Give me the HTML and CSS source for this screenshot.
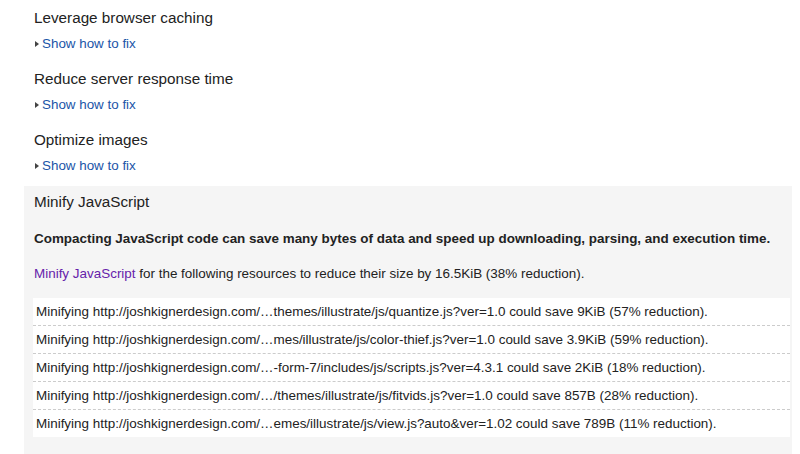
FILE: index.html
```html
<!DOCTYPE html>
<html lang="en">
<head>
  <meta charset="UTF-8" />
  <meta name="viewport" content="width=device-width, initial-scale=1.0" />
  <title>PageSpeed suggestions</title>
  <link rel="stylesheet" href="styles.css">
</head>
<body>
  <div class="rule">
    <h3>Leverage browser caching</h3>
    <a class="toggle" href="#"><span class="arrow"></span>Show how to fix</a>
  </div>
  <div class="rule">
    <h3>Reduce server response time</h3>
    <a class="toggle" href="#"><span class="arrow"></span>Show how to fix</a>
  </div>
  <div class="rule">
    <h3>Optimize images</h3>
    <a class="toggle" href="#"><span class="arrow"></span>Show how to fix</a>
  </div>

  <div class="rule open">
    <h3>Minify JavaScript</h3>
    <p class="summary">Compacting JavaScript code can save many bytes of data and speed up downloading, parsing, and execution time.</p>
    <p class="advice"><a class="visited" href="#">Minify JavaScript</a> for the following resources to reduce their size by 16.5KiB (38% reduction).</p>
    <ul class="urls">
      <li>Minifying http://joshkignerdesign.com/…themes/illustrate/js/quantize.js?ver=1.0 could save 9KiB (57% reduction).</li>
      <li>Minifying http://joshkignerdesign.com/…mes/illustrate/js/color-thief.js?ver=1.0 could save 3.9KiB (59% reduction).</li>
      <li>Minifying http://joshkignerdesign.com/…-form-7/includes/js/scripts.js?ver=4.3.1 could save 2KiB (18% reduction).</li>
      <li>Minifying http://joshkignerdesign.com/…/themes/illustrate/js/fitvids.js?ver=1.0 could save 857B (28% reduction).</li>
      <li>Minifying http://joshkignerdesign.com/…emes/illustrate/js/view.js?auto&amp;ver=1.02 could save 789B (11% reduction).</li>
    </ul>
  </div>
</body>
</html>
```

FILE: styles.css
```css
body {
  margin: 0;
  font-family: "Liberation Sans", Arial, sans-serif;
  color: #222;
  background: #fff;
}
.rule {
  margin-left: 24px;
  margin-right: 8px;
  padding: 7.5px 10px 9.5px;
}
h3 {
  margin: 0 0 8px;
  font-size: 15.25px;
  font-weight: normal;
  line-height: 20px;
}
.toggle {
  display: flex;
  align-items: center;
  height: 16px;
  font-size: 13.4px;
  line-height: 16px;
  color: #1a55a8;
  text-decoration: none;
}
.arrow {
  width: 0;
  height: 0;
  margin: 0 3px 0 1px;
  border-top: 3px solid transparent;
  border-bottom: 3px solid transparent;
  border-left: 4px solid #444;
}
.open {
  margin-top: 3px;
  padding: 6px 2px 24px 9px;
  background: #f5f5f5;
}
.open h3 {
  margin: 0 0 19px 1px;
}
.summary {
  margin: 0 0 19px 1px;
  font-size: 13.45px;
  line-height: 16px;
  font-weight: bold;
}
.advice {
  margin: 0 0 16px 1px;
  font-size: 13.45px;
  line-height: 16px;
}
.visited {
  color: #6622aa;
  text-decoration: none;
}
.urls {
  margin: 0;
  padding: 0;
  list-style: none;
  background: #fff;
}
.urls li {
  padding: 0 3px;
  font-size: 13.45px;
  line-height: 27px;
  white-space: nowrap;
  border-top: 1px dashed #ccc;
}
.urls li:first-child {
  border-top: none;
}
```
